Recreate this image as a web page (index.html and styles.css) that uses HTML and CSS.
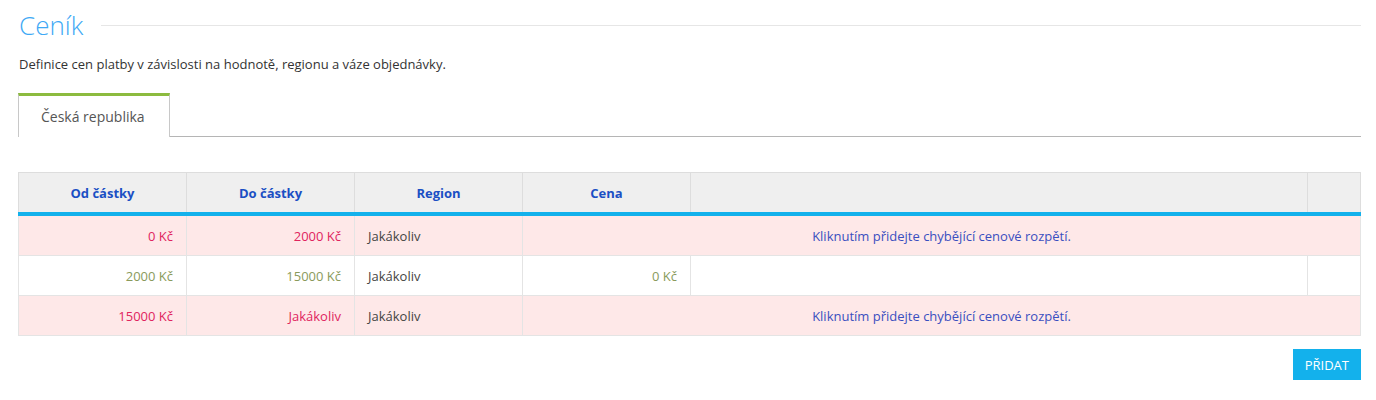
FILE: index.html
```html
<!DOCTYPE html>
<html lang="cs">
<head>
  <meta charset="UTF-8">
  <meta name="viewport" content="width=device-width, initial-scale=1.0">
  <title>Ceník</title>
  <link rel="stylesheet" href="styles.css">
</head>
<body>
  <div class="page">
    <div class="heading">
      <h1>Ceník</h1>
      <div class="headLine"></div>
    </div>
    <p class="intro">Definice cen platby v závislosti na hodnotě, regionu a váze objednávky.</p>

    <div class="tabs">
      <div class="tab active">Česká republika</div>
      <div class="tabRest"></div>
    </div>

    <table class="prices">
      <thead>
        <tr>
          <th class="cAmt">Od částky</th>
          <th class="cAmt">Do částky</th>
          <th class="cAmt">Region</th>
          <th class="cAmt">Cena</th>
          <th></th>
          <th class="cAct"></th>
        </tr>
      </thead>
      <tbody>
        <tr class="missing">
          <td class="num">0 Kč</td>
          <td class="num">2000 Kč</td>
          <td class="region">Jakákoliv</td>
          <td colspan="3" class="hint">Kliknutím přidejte chybějící cenové rozpětí.</td>
        </tr>
        <tr class="ok">
          <td class="num">2000 Kč</td>
          <td class="num">15000 Kč</td>
          <td class="region">Jakákoliv</td>
          <td class="num">0 Kč</td>
          <td></td>
          <td></td>
        </tr>
        <tr class="missing">
          <td class="num">15000 Kč</td>
          <td class="num">Jakákoliv</td>
          <td class="region">Jakákoliv</td>
          <td colspan="3" class="hint">Kliknutím přidejte chybějící cenové rozpětí.</td>
        </tr>
      </tbody>
    </table>

    <div class="actions">
      <button class="btnAdd">Přidat</button>
    </div>
  </div>
</body>
</html>
```

FILE: styles.css
```css
body {
  margin: 0;
  font-family: "Open Sans", "Liberation Sans", sans-serif;
  font-size: 13px;
  color: #333;
  background: #fff;
}
.page {
  padding: 6px 15px 0 18px;
}
.heading {
  display: flex;
  align-items: center;
  gap: 18px;
  height: 38px;
}
.heading h1 {
  margin: 0 0 0 1px;
  font-size: 26px;
  font-weight: 300;
  color: #3fa9f5;
  line-height: 38px;
}
.headLine {
  flex: 1;
  height: 1px;
  background: #e6e6e6;
  margin-top: 1px;
}
.intro {
  margin: 11px 0 0 1px;
  line-height: 18px;
}
.tabs {
  display: flex;
  align-items: flex-end;
  margin-top: 20px;
}
.tab {
  width: 128px;
  height: 41px;
  box-sizing: content-box;
  border-top: 3px solid #8cbb3f;
  border-left: 1px solid #c8c8c8;
  border-right: 1px solid #c8c8c8;
  padding-left: 22px;
  line-height: 41px;
  font-size: 14px;
  color: #555;
}
.tabRest {
  flex: 1;
  border-bottom: 1px solid #b5b5b5;
}
.prices {
  width: 100%;
  margin-top: 35px;
  border-collapse: collapse;
  table-layout: fixed;
}
.prices th {
  background: #efefef;
  border: 1px solid #dddddd;
  border-bottom: 4px solid #13b1ec;
  height: 39px;
  padding: 0;
  font-size: 13px;
  font-weight: 700;
  color: #1b4fc4;
}
.prices th.cAmt {
  width: 167px;
}
.prices th.cAct {
  width: 52px;
}
.prices td {
  border: 1px solid #e4e4e4;
  height: 39px;
  padding: 0 13px;
  font-size: 13px;
}
.prices td.num {
  text-align: right;
}
.missing td {
  background: #fee8e8;
}
.missing td.num {
  color: #e0245e;
}
.ok td.num {
  color: #8a9a5b;
}
.missing td.hint {
  text-align: center;
  color: #3a4fc0;
}
.prices td.region {
  color: #444;
}
.actions {
  display: flex;
  justify-content: flex-end;
  margin-top: 13px;
}
.btnAdd {
  background: #13b1ec;
  color: #fff;
  border: none;
  height: 31px;
  padding: 0 12px;
  font-family: inherit;
  font-size: 13px;
  text-transform: uppercase;
  cursor: pointer;
}
```
